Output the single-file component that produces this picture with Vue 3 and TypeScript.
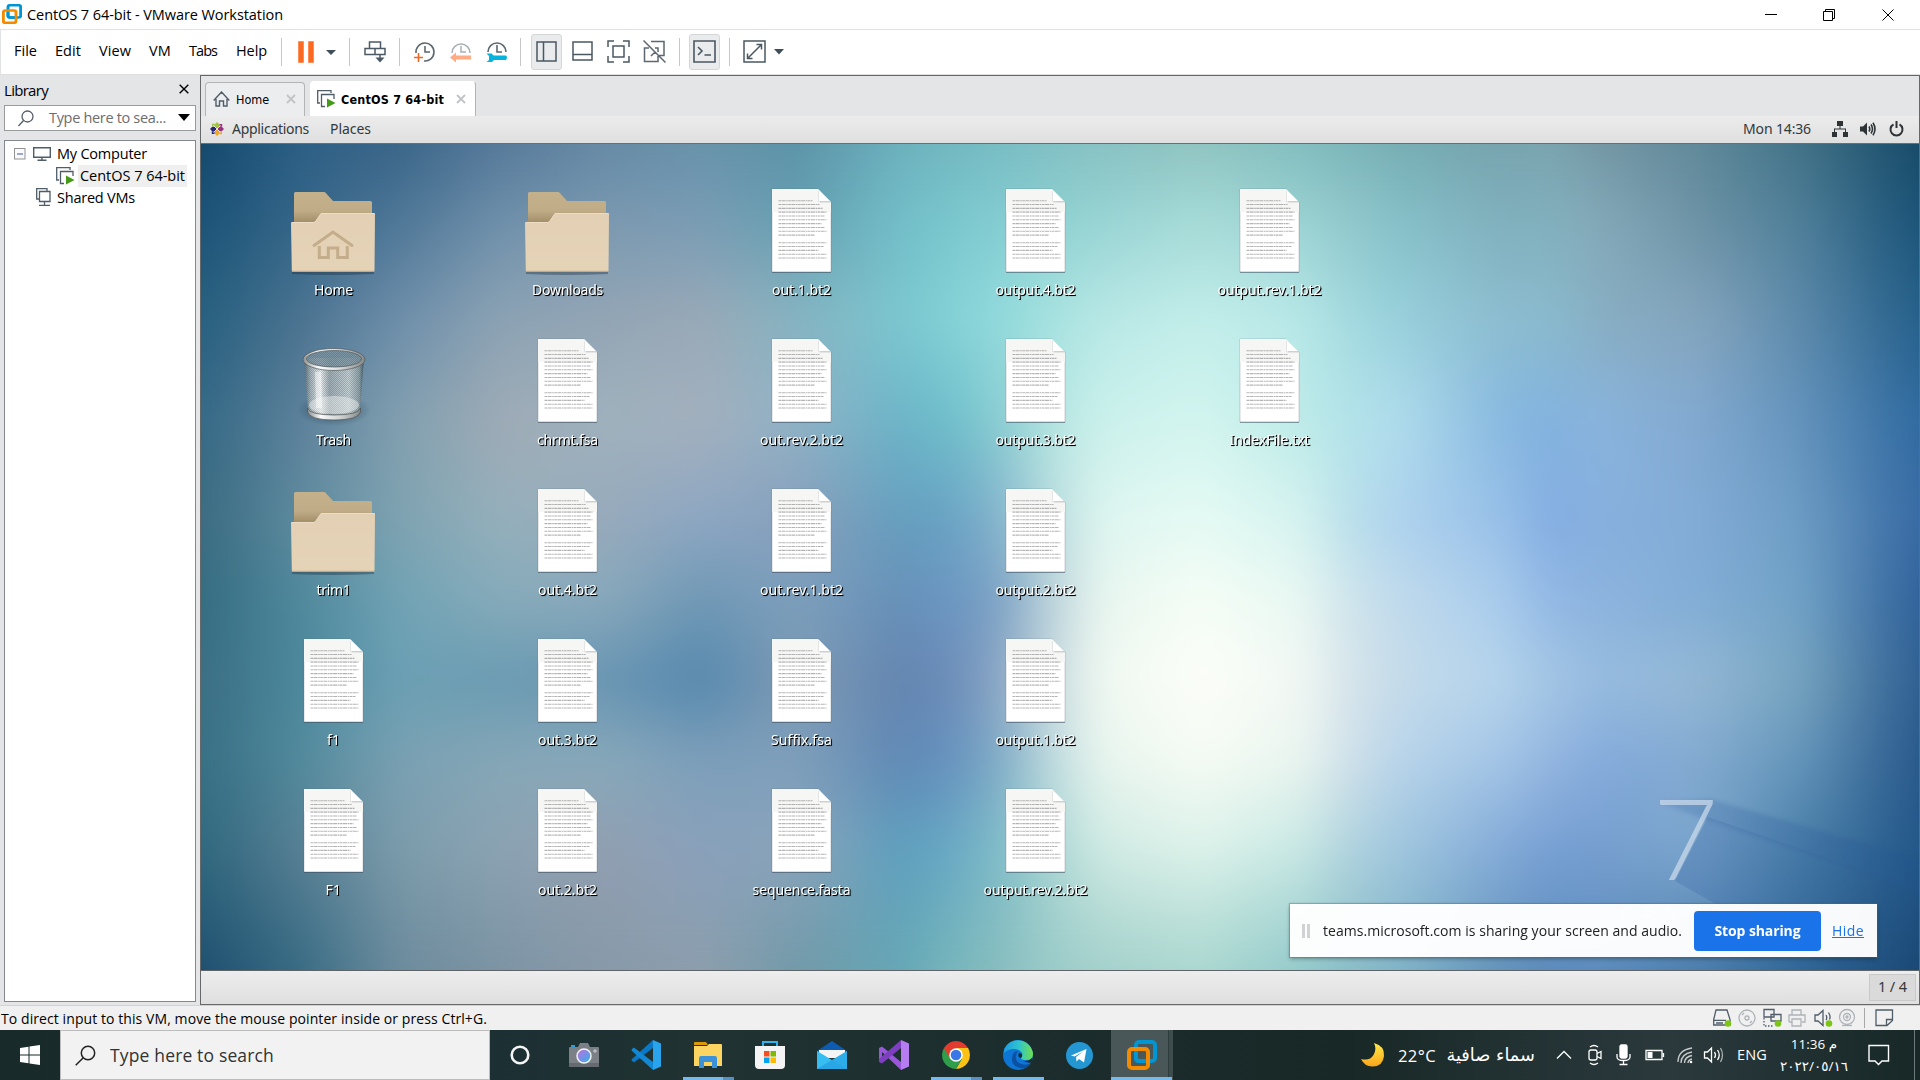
<script setup lang="ts">
import type { Directive } from 'vue'

/* Spreads the letter spacing of a label so that it fills the given width. */
const vFit: Directive<HTMLElement, number> = {
  mounted(el, binding) {
    const count = (el.textContent ?? '').trim().length
    const range = document.createRange()
    range.selectNodeContents(el)
    const natural = range.getBoundingClientRect().width
    if (count > 0) el.style.letterSpacing = `${((binding.value - natural) / count).toFixed(3)}px`
  },
}

type Kind = 'home' | 'folder' | 'trash' | 'file'
interface Item { kind: Kind; name: string; w: number }
const f = (name: string, w: number): Item => ({ kind: 'file', name, w })
const columns: Item[][] = [
  [{ kind: 'home', name: 'Home', w: 39 }, { kind: 'trash', name: 'Trash', w: 35 }, { kind: 'folder', name: 'trim1', w: 34 }, f('f1', 13), f('F1', 16)],
  [{ kind: 'folder', name: 'Downloads', w: 71 }, f('chrmt.fsa', 61), f('out.4.bt2', 59), f('out.3.bt2', 59), f('out.2.bt2', 59)],
  [f('out.1.bt2', 59), f('out.rev.2.bt2', 83), f('out.rev.1.bt2', 83), f('Suffix.fsa', 61), f('sequence.fasta', 98)],
  [f('output.4.bt2', 80), f('output.3.bt2', 80), f('output.2.bt2', 80), f('output.1.bt2', 80), f('output.rev.2.bt2', 104)],
  [f('output.rev.1.bt2', 104), f('IndexFile.txt', 80)],
]
const lines: [number, number][] = [34, 41, 44, 48, 46, 48, 43, 46, 48, 36, 0, 48, 45, 40, 48, 48].map((w, i) => [w, 11.7 + i * 3.82])

/* Wallpaper colour mesh: one row of colours for each listed height. */
const meshX = [201, 300, 400, 500, 600, 700, 800, 900, 950, 1000, 1050, 1100, 1200, 1300, 1350, 1400, 1500, 1550, 1600, 1700, 1800, 1919]
const meshY = [144, 220, 320, 420, 520, 600, 680, 760, 850, 970]
const mesh = [
  '15496c 2d5f85 3a6588 56799a 6689a5 6893aa 5c93a8 6cb0bd 72b7c0 78bcc3 80bfc4 88c1c3 8fc3c0 83bdbf 7cb5b9 76adb3 77a3ae 7aa5b0 7496a3 60899a 427287 174a68',
  '1b5377 356689 4f7797 6f90ab 7b99b0 7a9cb5 65a0b1 72bec8 7ac7ce 83cdd2 8ed1d0 98d4d4 a6dbd8 9bd3d3 90c7cc 86c0c8 80b0bd 82b0bd 84a9b8 6c92a5 4f7f99 1a5277',
  '27607f 4b7390 6f8fab 8ca3b4 93a5b5 9aa9b7 86b4c2 7bc7d0 84d2d7 92dadc a6e2e0 b8e8e6 c3eeea b8e8e8 a3dadf 98d0dc 8dbdd0 8abbce 88aec3 84a5bd 5d8aab 245f8a',
  '356986 5d819b 82a0b0 9fabb6 9fb2bd a4b0be 8fb2c6 6cb4c8 6fbfcb 8acdd2 b4e4e0 cbf1ec d3f5ef bdebe8 b3e3ea b0dcec 88b9e0 82b2df 8ab4dc 82a9d0 6493bc 2f6aa0',
  '3a6b80 5e8b9f 7fa3b1 95b0bc 98aabb 8da7c3 889fbb 659ebe 69a2c4 85b4cc b8dbdd def5f0 e6faf4 d6f3f0 b9dfea aed2ee 98c0e8 83ade2 88b0df 82abd5 6d9dc4 3769a3',
  '356c82 4f889c 70a3b5 86abba 89a9bb 6f98b5 7c9fbc 6790b8 6b96c2 7da2c4 bbd2da e8f6ef f5fdf6 e9f8f2 cfe4ec c0daec a9ccec 92b8e5 8cb3dd 82add6 71a2c6 2f6099',
  '3b6e84 4c889c 6ca0b4 6a9bb2 6995b3 5588ae 7f9ab4 6385b0 6b8cb8 8ca7c5 c6d9de f0f8f1 fdfef9 f2f8f4 d6e4ea c5dbea b5d4ec a4c6e4 97bce0 94b8d4 76a4bf 2d5d90',
  '386f84 528a9c 7aa1b3 86a7b7 88a9ba 7d9fba 7e9fbb 6089b5 6692bf 80acc6 bddade e8f5ee f5fbf4 eaf5ef cfe0ea b8d4ea a3c5e6 94b6e0 84abdc 83aad0 6495ba 27578a',
  '2f687e 587f94 7c9cab 8ca3b3 929fb0 8aa1bc 8aa4ba 5d9fbe 69a9c4 7fbdc8 a9d5d3 cfeae3 dcf2ea c8e8e4 afd2dd 9fc6de 84abd8 769fd3 769ecf 7ba6cc 4a7fa8 225688',
  '1f4f6f 376b83 6c8b9c 7c93a3 8799a9 8d9eac 7099a8 66a7b5 76b6bb 88bdbe 99cac8 a2cfca a9d6cf 92c9c9 88bcc6 7fb2c5 6191b8 5b8abb 5b8bbb 4a7cab 2f6697 1a4670',
]
const bands = mesh.map((row, i) => {
  const stops = row.split(' ').map((c, j) => `#${c} ${meshX[j] - 201}px`).join(', ')
  const mask = i === 0 ? 'none' : `linear-gradient(to bottom, transparent ${meshY[i - 1] - 144}px, #000 ${meshY[i] - 144}px)`
  return { backgroundImage: `linear-gradient(to right, ${stops})`, maskImage: mask }
})

const menus: [string, number, number][] = [['File', 23, 18], ['Edit', 26, 18], ['View', 32, 18], ['VM', 22, 18], ['Tabs', 28, 19], ['Help', 31, 14]]
type App = { id: string; open?: string }
const apps: App[] = [{ id: 'camera' }, { id: 'code' }, { id: 'files', open: 'multi' }, { id: 'store' }, { id: 'mail' }, { id: 'vs' }, { id: 'chrome', open: 'multi' }, { id: 'edge', open: 'one' }, { id: 'telegram' }, { id: 'vmware', open: 'active' }]
</script>

<template>
  <div class="screen">
    <header class="titlebar">
      <svg class="vmlogo" width="20" height="20" viewBox="0 0 30 34" preserveAspectRatio="none"><rect x="9" y="2" width="19" height="21" rx="3" fill="none" stroke="#0095d3" stroke-width="4.4" /><rect x="2" y="11" width="19" height="21" rx="3" fill="none" stroke="#f38b00" stroke-width="4.4" /><path d="M9 14v6q0 3 3 3h7" fill="none" stroke="#0095d3" stroke-width="4.4" /></svg>
      <span v-fit="256" class="title">CentOS 7 64-bit - VMware Workstation</span>
      <svg class="winbtns" width="130" height="14" viewBox="0 0 130 14" fill="none" stroke="#000" stroke-width="1"><path d="M0 6.500h12M58.500 3.500h9v9h-9zM60.500 3.500v-2h9v9h-2M117.500 1.500l11 11M128.500 1.500l-11 11" /></svg>
    </header>

    <nav class="toolbar">
      <span v-for="m in menus" :key="m[0]" class="menu" :style="{ width: m[1] + 'px', marginRight: m[2] + 'px' }"><span v-fit="m[1]">{{ m[0] }}</span></span>
      <i class="sep" />
      <svg class="t1" width="38" height="22" viewBox="0 0 38 22"><path d="M.5.500h5v21h-5zM10.500.500h5v21h-5z" fill="#fb6a20" stroke="#fb6a20" stroke-width=".5" /><path d="M28 9h10l-5 5z" fill="#3e4e5b" /></svg>
      <i class="sep s2" />
      <svg class="t2" width="22" height="22" viewBox="0 0 22 22" fill="none" stroke="#4b5a66" stroke-width="1.500"><path d="M5.500 1h11v6.500h-11zM1 7.500h20v6H1zM11 7.500v6M16 13v6" /><path d="M11.500 16.500h9L16 21.500z" fill="#4b5a66" stroke="none" /></svg>
      <i class="sep s3" />
      <svg class="t3" width="22" height="22" viewBox="0 0 22 22" fill="none" stroke="#5c6770" stroke-width="1.600"><path d="M2 12A9 9 0 1 1 10 20M11 5v6h5" /><path d="M4.500 12v9M0 16.500h9" stroke="#f26522" /></svg>
      <svg class="t4" width="22" height="22" viewBox="0 0 22 22" fill="none" stroke="#a9b0b5" stroke-width="1.500"><path d="M2 12a9 9 0 1 1 18 0M11 5v6h5" /><path d="M0 16.500l6-5v3h15v4H6v3z" fill="#ffac84" stroke="none" /></svg>
      <svg class="t5" width="22" height="22" viewBox="0 0 22 22" fill="none" stroke="#5c6770" stroke-width="1.600"><path d="M2 11a9 9 0 1 1 18 0M11 4v7h5" /><path d="M.5 12.500h5l2 2H20q2 2 0 4.500H8l-2 2H.5l2.500-2v-4z" fill="#07b3dc" stroke="none" /></svg>
      <i class="sep s4" />
      <span class="pressed p1"><svg width="21" height="21" viewBox="0 0 21 21" fill="none" stroke="#4a5863" stroke-width="1.500"><path d="M1 1h19v19H1zM7.500 1v19" /></svg></span>
      <svg class="t6" width="21" height="20" viewBox="0 0 21 20" fill="none" stroke="#4a5863" stroke-width="1.500"><path d="M1 1h19v18H1zM1 13.500h19" /></svg>
      <svg class="t7" width="23" height="23" viewBox="0 0 23 23" fill="none" stroke="#4a5863" stroke-width="1.500"><path d="M1 7V1h6M16 1h6v6M22 16v6h-6M7 22H1v-6M6 6h11v11H6z" /></svg>
      <svg class="t8" width="23" height="23" viewBox="0 0 23 23" fill="none" stroke="#5c6770" stroke-width="1.500"><path d="M8 1.500h13v14h-5M12 8h3v4M6 8H1.500v13.500H15V16M.5.500l22 22M12 12l-4 4" /></svg>
      <i class="sep s5" />
      <span class="pressed p2"><svg width="23" height="23" viewBox="0 0 23 23" fill="none" stroke="#4a5863" stroke-width="1.600"><path d="M1 1h21v21H1zM5 7l4 4-4 4M11.500 15h6.500" /></svg></span>
      <i class="sep s6" />
      <svg class="t9" width="41" height="23" viewBox="0 0 41 23" fill="none" stroke="#4a5863" stroke-width="1.500"><path d="M1 1h21v21H1zM13.500 4.500h5v5M9.500 18.500h-5v-5M18.500 4.500l-14 14" /><path d="M31 9h10l-5 5.500z" fill="#3e4e5b" stroke="none" /></svg>
    </nav>

    <main class="work">
      <aside class="library">
        <div class="libhead"><span v-fit="44">Library</span><svg width="10" height="10" viewBox="0 0 10 10" stroke="#000" stroke-width="1.400"><path d="M.7.700l8.600 8.600M9.300.700L.7 9.300" /></svg></div>
        <div class="libsearch">
          <svg width="16" height="17" viewBox="0 0 16 17" fill="none" stroke="#555f68" stroke-width="1.300"><circle cx="9.500" cy="6.500" r="5.500" /><path d="M5.500 10.500L.5 16" /></svg>
          <span v-fit="117">Type here to sea...</span>
          <svg width="12" height="7" viewBox="0 0 12 7"><path d="M0 0h12L6 7z" /></svg>
        </div>
        <div class="tree">
          <div class="row r1"><svg width="12" height="12" viewBox="0 0 12 12"><rect x=".5" y=".5" width="10.500" height="10.500" fill="#fafafa" stroke="#939393" /><path d="M3 6h6" stroke="#3b53b0" /></svg><svg class="mon" width="18" height="14" viewBox="0 0 18 14" fill="none" stroke="#4f5d69" stroke-width="1.400"><path d="M.7.700h16.600v9.600H.7zM9 10.500V13M4.500 13.300h9" /></svg><span v-fit="90">My Computer</span></div>
          <div class="row r2"><svg width="19" height="18" viewBox="0 0 19 18" fill="none" stroke="#4f5d69" stroke-width="1.300"><path d="M3 13H.7V.7H14V3M8 16.500H4.500V4.500H17V9" /><path d="M10 8.500l8.500 4.500-8.500 4.500z" fill="#459a17" stroke="none" /></svg><span class="picked"><span v-fit="105">CentOS 7 64-bit</span></span></div>
          <div class="row r3"><svg width="15" height="18" viewBox="0 0 15 18" fill="none" stroke="#4f5d69" stroke-width="1.300"><path d="M3 11H.7V.7H11V3M3.500 3.500h10.500V13.500H3.500zM8.500 14v3M3 17.300h11" /></svg><span v-fit="78">Shared VMs</span></div>
        </div>
      </aside>

      <section class="console">
        <div class="tabs">
          <div class="tab home"><svg width="17" height="16" viewBox="0 0 17 16" fill="none" stroke="#4f5d69" stroke-width="1.400"><path d="M.7 9.500L8.500 1l7.800 8.500M3 8v7h3.500v-5h4v5H14V8" /></svg><span v-fit="33">Home</span><svg class="tx" width="10" height="10" viewBox="0 0 10 10" stroke="#c2c3c4" stroke-width="1.800"><path d="M1 1l8 8M9 1L1 9" /></svg></div>
          <div class="tab active"><svg width="19" height="18" viewBox="0 0 19 18" fill="none" stroke="#4f5d69" stroke-width="1.300"><path d="M3 13H.7V.7H14V3M8 16.500H4.500V4.500H17V9" /><path d="M10 8.500l8.500 4.500-8.500 4.500z" fill="#459a17" stroke="none" /></svg><span v-fit="103">CentOS 7 64-bit</span><svg class="tx" width="10" height="10" viewBox="0 0 10 10" stroke="#c2c3c4" stroke-width="1.800"><path d="M1 1l8 8M9 1L1 9" /></svg></div>
        </div>
        <div class="gnome">
          <svg width="14" height="14" viewBox="0 0 14 14"><g v-for="a in [0, 90, 180, 270]" :key="a" :transform="`rotate(${a} 7 7)`"><path d="M7 0l2.200 2.200v3L7 7 4.800 5.200v-3z" :fill="['#a3c443', '#9b2f7f', '#efa724', '#262577'][a / 90]" /><path d="M9.500 2h2.700v2.700L9.500 4.500z" :fill="['#9b2f7f', '#efa724', '#262577', '#a3c443'][a / 90]" /></g><path d="M3.500 3.500l7 7M10.500 3.500l-7 7" stroke="#eee" stroke-width=".9" /></svg>
          <span v-fit="77" class="applications">Applications</span><span v-fit="41" class="places">Places</span>
          <span v-fit="68" class="clock">Mon 14:36</span>
          <svg class="g1" width="16" height="16" viewBox="0 0 16 16" fill="#2e3436"><path d="M5 0h6v5H8.500v2.500H14V11h2v5h-5v-5h2V8.500H3V11h2v5H0v-5h2V7.500h5.500V5H5z" /></svg>
          <svg class="g2" width="16" height="14" viewBox="0 0 16 14" fill="none" stroke="#2e3436" stroke-width="1.600"><path d="M0 4.500h3L7 .5v13L3 9.500H0z" fill="#2e3436" stroke="none" /><path d="M9 4.500q1.500 2.500 0 5M11 2.500q3 4.500 0 9M13 .7q4 6.300 0 12.600" /></svg>
          <svg class="g3" width="15" height="16" viewBox="0 0 15 16" fill="none" stroke="#2e3436" stroke-width="2"><path d="M4.500 3.300a6 6 0 1 0 6 0M7.500 0v7" /></svg>
        </div>
        <div class="desktop">
          <div v-for="(b, i) in bands" :key="i" class="band" :style="b" />
          <div class="haze" />
          <svg class="rays" width="320" height="190" viewBox="0 0 320 190"><defs><linearGradient id="ray" x1="0" x2="1"><stop offset="0" stop-color="#4672ac" stop-opacity=".25" /><stop offset=".5" stop-color="#3a6aa4" stop-opacity=".4" /><stop offset="1" stop-color="#1c4f86" stop-opacity=".45" /></linearGradient><linearGradient id="wide" x1="0" x2="1"><stop offset="0" stop-color="#4672b0" stop-opacity=".36" /><stop offset="1" stop-color="#1e5288" stop-opacity=".1" /></linearGradient></defs><path class="soft" d="M59 22l51-3 230 66v34L106 40z" fill="url(#ray)" /><path d="M108 37l212 73v80H232L75 101z" fill="url(#wide)" /></svg>
          <span class="seven">7</span>
          <span class="brand">CENTOS</span>
          <div class="icons">
            <div v-for="(col, c) in columns" :key="c" class="col">
              <div v-for="it in col" :key="it.name" class="item">
                <div class="pic">
                  <svg v-if="it.kind === 'file'" class="doc" width="61" height="86" viewBox="-1 -1 61 86"><path d="M0 0h46l13 13v70H0z" fill="#fff" stroke="#50646e" stroke-opacity=".35" stroke-width=".8" /><path d="M0 83.400h59" stroke="#345" stroke-opacity=".5" /><path d="M0 0h46v13h13v10H0z" fill="#f6f6f5" /><path d="M46 0l13 13H47.500z" fill="#fff" /><path d="M47.500 12.800H59" stroke="#b9bcbd" stroke-width="1" /><path d="M46.500 2v11" stroke="#e3e4e4" /><path v-for="(l, n) in lines" :key="n" :d="`M6.500 ${l[1]}h${l[0]}`" stroke="#777" stroke-opacity=".55" stroke-width="1.100" stroke-dasharray="2.600 .5 4 .6 1.600 .5" /></svg>
                  <svg v-else-if="it.kind === 'trash'" class="trash" width="76" height="84" viewBox="-7 -4 76 84">
                    <defs><linearGradient id="can" x1="0" x2="1"><stop offset="0" stop-color="#5b6d74" /><stop offset=".1" stop-color="#aab7bc" /><stop offset=".28" stop-color="#fff" /><stop offset=".42" stop-color="#a5b1b6" /><stop offset=".75" stop-color="#d0d9db" /><stop offset=".92" stop-color="#93a4a9" /><stop offset="1" stop-color="#3e535d" /></linearGradient><linearGradient id="rim" x1="0" x2="1"><stop offset="0" stop-color="#8d8f8e" /><stop offset=".25" stop-color="#fff" /><stop offset=".6" stop-color="#d8d9d8" /><stop offset="1" stop-color="#858887" /></linearGradient><pattern id="net" width="2" height="2" patternUnits="userSpaceOnUse"><rect width="1" height="1" fill="#2c4654" fill-opacity=".26" /><rect x="1" y="1" width="1" height="1" fill="#2c4654" fill-opacity=".26" /></pattern><radialGradient id="floor"><stop offset="0" stop-color="#10293b" stop-opacity=".6" /><stop offset="1" stop-color="#10293b" stop-opacity="0" /></radialGradient></defs>
                    <ellipse cx="31" cy="62" rx="37" ry="16" fill="url(#floor)" />
                    <path d="M1 10l4 52q2 9 26 9t26-9l4-52z" fill="url(#can)" fill-opacity=".9" /><path d="M1 10l4 52q2 9 26 9t26-9l4-52z" fill="url(#net)" />
                    <ellipse cx="31" cy="57" rx="25" ry="9" fill="#f4f6f5" fill-opacity=".45" />
                    <path d="M4.500 60q2 7 26.500 7t26.500-7v4q-2 8-26.500 8t-26.500-8z" fill="url(#rim)" fill-opacity=".9" stroke="#4d5150" stroke-width=".7" />
                    <ellipse cx="31" cy="11.500" rx="29" ry="9.500" fill="#8098a4" fill-opacity=".85" /><ellipse cx="31" cy="11.500" rx="29" ry="9.500" fill="url(#net)" /><path d="M0 11.500a31 11 0 0 1 62 0 31 11 0 0 1-62 0zM3.500 11a27.500 8 0 0 0 55 0 27.500 8.500 0 0 0-55 0z" fill="url(#rim)" fill-rule="evenodd" stroke="#50585a" stroke-width=".7" /><path d="M15 24L16 60" stroke="#fff" stroke-opacity=".45" stroke-width="6" />
                  </svg>
                  <svg v-else class="folder" width="88" height="86" viewBox="-2 -1 88 86">
                    <defs><linearGradient id="back" gradientUnits="userSpaceOnUse" x1="0" x2="0" y1="0" y2="30"><stop offset="0" stop-color="#c4b18b" /><stop offset=".62" stop-color="#c0ad87" /><stop offset="1" stop-color="#a3906b" /></linearGradient><linearGradient id="front" y1="0" y2="1" x1="0" x2="0"><stop offset="0" stop-color="#e3d0b4" /><stop offset="1" stop-color="#e5d3b8" /></linearGradient></defs>
                    <path d="M1 79h82v3q-41 2-82 0z" fill="#14232e" fill-opacity=".35" />
                    <path d="M3 31V1.500Q3 0 4.500 0H33q1 0 2 1.200L42 9h37.500Q81 9 81 10.500V30z" fill="url(#back)" />
                    <path d="M0 31q0-1 1-1h21.500q1.500 0 2.200-1.200l4.600-6.600q.8-1.200 2-1.200H83q1 0 1 1l-.5 56.500q0 1.500-1.500 1.500H2Q.8 80 .8 78.500z" fill="url(#front)" /><path d="M1 79.300h82" stroke="#cfa97d" stroke-width="1.200" /><path d="M1 30.500h22q1.500-.5 2-1.500l5-7.500h53.500" fill="none" stroke="#efe0ca" stroke-width=".8" />
                    <g v-if="it.kind === 'home'" fill="none" stroke="#c4ad8b" stroke-width="3"><path d="M23 53.500L42 40l19 13.500" stroke-linecap="round" /><path d="M28.300 54v11.500h9V56h9.400v9.500h9.600V54" /></g>
                  </svg>
                </div>
                <span v-fit="it.w" class="label">{{ it.name }}</span>
              </div>
            </div>
          </div>
          <div class="share">
            <i class="grip" /><span v-fit="359" class="msg">teams.microsoft.com is sharing your screen and audio.</span>
            <span class="stop"><span v-fit="86">Stop sharing</span></span><span v-fit="32" class="hide">Hide</span>
          </div>
        </div>
        <div class="panel"><span class="pager"><span v-fit="29">1 / 4</span></span></div>
      </section>
    </main>

    <footer class="status">
      <span v-fit="486" class="hint">To direct input to this VM, move the mouse pointer inside or press Ctrl+G.</span>
      <svg class="devices" width="182" height="20" viewBox="0 0 182 20" fill="none" stroke="#4f5d69" stroke-width="1.300">
        <path d="M1.700 11.500L4 2h11l3 9.500V17H1.700zM1.700 12.300H14M4 15h7" /><circle cx="16" cy="15.500" r="3.300" fill="#7cc514" stroke="none" />
        <g stroke="#adb3b8"><circle cx="35" cy="10" r="8" /><circle cx="35" cy="10" r="2" /><path d="M30 7l2-2M38 15l2-2" /><path d="M80 7V2h9v5M77 14V7h16v7h-3M80 11h9v7h-9zM80 14h-3" /><circle cx="135" cy="9" r="7.500" /><circle cx="135" cy="9" r="3.500" /><circle cx="135" cy="9" r="1" /><path d="M130 17.500h10" /></g>
        <path d="M52 1.500h10V9H52zM59 6.500h10V13H59z" /><path d="M52 10v8h9" stroke-dasharray="1.500 1.500" /><circle cx="66" cy="15.500" r="3.300" fill="#7cc514" stroke="none" />
        <path d="M103 7h3l5-4.500v15l-5-4.500h-3zM114 7q1.500 3 0 5M116.500 4.500q2.500 4 1 7" /><circle cx="117" cy="15.500" r="3.300" fill="#7cc514" stroke="none" />
        <path d="M152.500 0v20" stroke="#a7a7a7" stroke-width="1" /><path d="M164 2h16.500v10.500L175 17.500h-11zM174.500 17.500v-6h6" />
      </svg>
    </footer>

    <footer class="taskbar">
      <span class="start"><svg width="20" height="20" viewBox="0 0 20 20" fill="#fff"><path d="M0 3l8.500-1.300v7.800H0zM9.500 1.500L20 0v9.500H9.500zM0 10.500h8.500v7.800L0 17zM9.500 10.500H20V20L9.500 18.500z" /></svg></span>
      <div class="search"><svg width="21" height="21" viewBox="0 0 21 21" fill="none" stroke="#222" stroke-width="1.500"><circle cx="13" cy="8" r="6.700" /><path d="M8.300 12.700L.7 20.300" /></svg><span v-fit="164">Type here to search</span></div>
      <span class="cortana"><svg width="20" height="20" viewBox="0 0 20 20"><circle cx="10" cy="10" r="8.300" fill="none" stroke="#f4f4f4" stroke-width="2.600" /></svg></span>
      <span v-for="a in apps" :key="a.id" class="app" :class="a.open">
        <svg v-if="a.id === 'camera'" width="30" height="24" viewBox="0 0 30 24"><defs><linearGradient id="lens" x1="0" x2="1" y2="1"><stop offset=".2" stop-color="#a77be0" /><stop offset="1" stop-color="#27b5f0" /></linearGradient></defs><path d="M2 2h4v3H2z" fill="#2b9ee0" /><path d="M0 5q0-1 1-1h8l2-4h8l2 4h8q1 0 1 1v19H0z" fill="#7b8086" /><path d="M0 20h30v4H0z" fill="#666b71" /><circle cx="15" cy="13" r="7" fill="url(#lens)" stroke="#f2f2f2" stroke-width="1.500" /><path d="M26 6v4M24 8h4" stroke="#c9cdd1" /></svg>
        <svg v-else-if="a.id === 'code'" width="30" height="30" viewBox="0 0 30 30"><path d="M22 0l8 3.500v23L22 30z" fill="#29a3ec" /><path d="M22 0L1 19q-1 1 0 2l2 1.500L22 8z" fill="#0a78c4" /><path d="M22 30L1 11q-1-1 0-2l2-1.500L22 22z" fill="#1288d4" /></svg>
        <svg v-else-if="a.id === 'files'" width="28" height="26" viewBox="0 0 28 26"><path d="M0 1q0-1 1-1h11l2 3H0z" fill="#dc9a06" /><path d="M0 4h13l2-2h12q1 0 1 1v21H0z" fill="#fcd462" /><path d="M5 26V16q0-2 2-2h14q2 0 2 2v10h-5v-6h-8v6z" fill="#3c92d8" /></svg>
        <svg v-else-if="a.id === 'store'" width="30" height="30" viewBox="0 0 30 30"><path d="M8 7V2h14v5" fill="none" stroke="#2fb4ee" stroke-width="2" /><path d="M0 6h30v19q0 4-4 4H4q-4 0-4-4z" fill="#f4f4f4" /><path d="M9 11h5.500v5.500H9z" fill="#f25022" /><path d="M15.500 11H21v5.500h-5.500z" fill="#7fba00" /><path d="M9 17.500h5.500V23H9z" fill="#00a4ef" /><path d="M15.500 17.500H21V23h-5.500z" fill="#ffb900" /></svg>
        <svg v-else-if="a.id === 'mail'" width="30" height="28" viewBox="0 0 30 28"><path d="M0 10L15 0l15 10v5H0z" fill="#0d5cb0" /><path d="M2 9h26v8H2z" fill="#f4f4f4" /><path d="M0 10l15 9 15-9v18H0z" fill="#36bdf2" /><path d="M15 19l15 9H0z" fill="#2aa5e6" /><path d="M15 19l15 9V10z" fill="#1b8bd8" fill-opacity=".35" /></svg>
        <svg v-else-if="a.id === 'vs'" width="30" height="30" viewBox="0 0 30 30"><path d="M22 0l8 3.500v23L22 30z" fill="#b57df0" /><path d="M0 8l3-1.500L22 22v8L3 12v7l-3 2z" fill="#9a57dc" /><path d="M22 0v8L3 23.500 0 22v-3z" fill="#7d3fc0" /></svg>
        <svg v-else-if="a.id === 'chrome'" width="28" height="28" viewBox="0 0 28 28"><path d="M26.100 7A14 14 0 0 1 14 28l6-10.500L14 7z" fill="#fbc116" /><path d="M14 14L1.900 7A14 14 0 0 0 14 28l6-10.500z" fill="#2f9e4a" /><path d="M8 17.500L1.900 7a14 14 0 0 1 24.200 0H14z" fill="#e33b2e" /><circle cx="14" cy="14" r="6.800" fill="#fff" /><circle cx="14" cy="14" r="5.300" fill="#3b78e7" /></svg>
        <svg v-else-if="a.id === 'edge'" width="30" height="30" viewBox="0 0 30 30"><defs><linearGradient id="wave" x1="0" x2="1"><stop offset="0" stop-color="#1d9be0" /><stop offset=".5" stop-color="#2fc3d0" /><stop offset="1" stop-color="#6fe04c" /></linearGradient></defs><circle cx="15" cy="15" r="15" fill="#0d75d4" /><path d="M1 10A15 15 0 0 1 30 14q0 6-7 6-5 0-5-2 2-2 1-5-2-4-8-4-6 0-10 4z" fill="url(#wave)" /><path d="M10 14q-4 12 8 14 7 1 10-5-4 3-10 1-6-2-5-8 0-3 2-5-3 0-5 3z" fill="#0d4fa0" /><path d="M18 18q-4-1-2-5 3 0 3 2 0 2-1 3zM20.500 21q6 .500 9-3.500l-1 5q-3 1-8-1.500z" fill="#1b2b2e" /></svg>
        <svg v-else-if="a.id === 'telegram'" class="tg" width="27" height="27" viewBox="0 0 27 27"><circle cx="13.500" cy="13.500" r="13.500" fill="#2497d3" /><path d="M5 13.500L20.500 7 18 20.500l-5-3.500-2.500 2.500-.5-4.500 7-5.500-8.500 5z" fill="#fff" /></svg>
        <svg v-else width="30" height="30" viewBox="0 0 30 30"><rect x="9" y="2" width="19" height="19" rx="3" fill="none" stroke="#0095d3" stroke-width="4" /><rect x="2" y="9" width="19" height="19" rx="3" fill="none" stroke="#f38b00" stroke-width="4" /><path d="M9 12v6q0 3 3 3h7" fill="none" stroke="#0095d3" stroke-width="4" /></svg>
      </span>
      <div class="tray">
        <svg class="moon" width="24" height="24" viewBox="0 0 24 24"><defs><linearGradient id="moon" x1="0" x2="0" y2="1"><stop offset="0" stop-color="#ffe94a" /><stop offset="1" stop-color="#f9a51a" /></linearGradient></defs><path d="M13 0Q24 3 23 13T12 23.500Q4 24 0 16q9 2 12.500-4T13 0z" fill="url(#moon)" /></svg>
        <span v-fit="38" class="temp">22°C</span><span class="sky" dir="rtl" lang="ar">سماء صافية</span>
        <svg class="y1" width="168" height="22" viewBox="0 0 168 22" fill="none" stroke="#fff" stroke-width="1.300">
          <path d="M1 14.500l7-7 7 7" /><rect x="33" y="6" width="8" height="10" rx="2" /><path d="M41 9.500l4-2v7l-4-2M34 3q4-3 8 0M34 19q4 3 8 0" />
          <rect x="64" y="1" width="7" height="13" rx="1.500" fill="#fff" /><path d="M61 10v3q0 3.500 6.500 3.500T74 13v-3M67.500 17v3M63.500 20.500h8" />
          <path d="M90 6.500h16v9H90zM107.500 9v4" /><path d="M91.500 8h5v6h-5z" fill="#fff" stroke="none" />
          <g stroke-opacity=".75"><path d="M122 18Q122 6 136 4M125 19q0-9 11-11M128.500 19q0-6 7.500-7.500M132 19q0-3 4-4" /></g><circle cx="135" cy="18" r="1.300" fill="#fff" stroke="none" />
          <path d="M148.500 8h3l4-4v14l-4-4h-3zM158.500 8q2 3 0 6M161.500 6q3.500 5 0 10" /><path d="M164.500 4q4 7 0 14" stroke-opacity=".6" />
        </svg>
        <span v-fit="30" class="lang">ENG</span>
        <span class="when"><span>11:36 م</span><span>٢٠٢٢/٠٥/١٦</span></span>
        <svg class="bell" width="22" height="22" viewBox="0 0 22 22" fill="none" stroke="#fff" stroke-width="1.400"><path d="M1 1.500h19.500v15.500H14l-3.500 3.500L7 17H1z" /></svg>
        <i class="peek" />
      </div>
    </footer>
  </div>
</template>

<style>
body { margin: 0; overflow: hidden; }
</style>

<style scoped>
.screen { width: 1920px; height: 1080px; display: flex; flex-direction: column; overflow: hidden; font: 15px/20px "Open Sans", "Noto Sans", sans-serif; color: #000; background: #e4e5e7; white-space: nowrap; }
svg { display: block; flex: none; }
span { flex: none; }
i { flex: none; display: block; }
.titlebar { height: 30px; background: #fff; border-bottom: 1px solid #e1e2e3; display: flex; align-items: center; box-sizing: border-box; }
.vmlogo { margin-left: 2px; margin-top: -2px; }
.title { margin-left: 5px; font-size: 14.5px; }
.winbtns { margin-left: auto; margin-right: 25px; }
.toolbar { height: 45px; background: #fff; border-left: 1px solid #e1e2e3; border-bottom: 1px solid #dedfe0; display: flex; align-items: center; padding: 0 0 1px 13px; box-sizing: border-box; }
.menu { font-size: 14.5px; margin-top: -1px; }
.sep { width: 1px; height: 28px; background: #c6c7c9; }
.t1 { margin-left: 16px; } .s2 { margin-left: 13px; } .t2 { margin-left: 14px; } .s3 { margin-left: 13px; }
.t3 { margin-left: 14px; } .t4 { margin-left: 14px; } .t5 { margin-left: 14px; } .s4 { margin-left: 12px; }
.pressed { box-sizing: border-box; width: 31px; height: 36px; border: 1px solid #d4d7d8; border-radius: 3px; background: #e9ebec; display: flex; align-items: center; justify-content: center; }
.p1 { margin-left: 10px; } .t6 { margin-left: 10px; margin-top: -1px; } .t7 { margin-left: 14px; } .t8 { margin-left: 13px; }
.s5 { margin-left: 13px; } .p2 { margin-left: 9px; } .s6 { margin-left: 9px; } .t9 { margin-left: 13px; }
.work { height: 930px; display: flex; border-bottom: 1px solid #d2d3d5; }
.library { width: 200px; box-sizing: border-box; padding: 0 4px 3px; display: flex; flex-direction: column; }
.libhead { height: 30px; display: flex; align-items: center; justify-content: space-between; padding: 0 7px 1px 0; box-sizing: border-box; }
.libhead svg { margin-top: -1px; }
.libsearch { height: 26px; box-sizing: border-box; border: 1px solid #9a9b9d; background: #fff; display: flex; align-items: center; padding-left: 13px; color: #6d6d6d; font-size: 14.5px; }
.libsearch span { margin-left: 15px; width: 121px; }
.libsearch svg:last-child { margin-left: 8px; margin-top: -2px; }
.tree { margin-top: 9px; flex: 1; border: 1px solid #828790; background: #fff; padding-top: 2px; font-size: 14.5px; }
.row { height: 22px; display: flex; align-items: center; }
.r1 { padding-left: 9px; } .r1 .mon { margin: 0 6px 0 7px; }
.r2 { padding-left: 51px; } .picked { background: #efefef; height: 22px; line-height: 22px; padding: 0 2px; margin-left: 3px; width: 105px; }
.r3 { padding-left: 31px; } .r3 svg { margin-top: -2px; } .r3 span { margin-left: 6px; }
.console { width: 1720px; box-sizing: border-box; border: 1px solid #66686a; display: flex; flex-direction: column; height: 930px; }
.tabs { height: 40px; display: flex; align-items: flex-end; padding-left: 4px; box-sizing: border-box; font: 12.5px/16px "DejaVu Sans Condensed", "DejaVu Sans", sans-serif; }
.tab { box-sizing: border-box; border: 1px solid #b2b4b6; border-bottom: 0; border-radius: 4px 4px 0 0; display: flex; align-items: center; height: 34px; padding-bottom: 1px; }
.tab span { padding-top: 2px; }
.home { width: 100px; background: #ecedef; padding-left: 7px; } .home span { margin-left: 6px; width: 33px; } .home .tx { margin-left: 17px; }
.active { width: 166px; height: 35px; margin-left: 5px; background: #fff; padding-left: 6px; border-left-color: #fff; border-top-color: #fff; font-weight: 700; }
.active span { margin-left: 5px; width: 103px; } .active .tx { margin-left: 12px; }
.gnome { height: 28px; box-sizing: border-box; border-bottom: 1px solid #6c6e70; background: linear-gradient(#ececec, #dfdfdf); display: flex; align-items: center; padding: 0 0 1px 9px; font: 14px/20px "Noto Sans", sans-serif; color: #33393b; }
.applications { margin-left: 8px; width: 77px; } .places { margin-left: 21px; } .clock { margin-left: auto; width: 68px; }
.g1 { margin-left: 21px; } .g2 { margin-left: 12px; } .g3 { margin: 0 15px 0 13px; }
.desktop { position: relative; height: 826px; overflow: hidden; border-bottom: 1px solid #5f6468; }
.band { position: absolute; inset: 0; }
.haze { position: absolute; inset: 0; backdrop-filter: blur(18px); }
.rays { position: absolute; left: 1399px; top: 636px; }
.soft { filter: blur(2px); }
.seven { position: absolute; left: 1452px; top: 618px; font: 300 112px/150px "Lato", sans-serif; color: rgba(205, 219, 236, .72); }
.brand { position: absolute; left: 1420px; top: 761px; font: 13px/14px "Lato", sans-serif; letter-spacing: 14px; color: #d6e4f2; }
.icons { position: relative; display: flex; padding: 36px 0 0 15px; }
.col { width: 234px; display: flex; flex-direction: column; }
.item { height: 150px; display: flex; flex-direction: column; align-items: center; }
.pic { height: 100px; display: flex; justify-content: center; }
.doc { margin-top: 8px; } .folder { margin-top: 11px; } .trash { margin-top: 14px; margin-left: 1px; }
.label { margin-left: 1px; font: 14px/20px "Noto Sans", sans-serif; color: #fff; text-shadow: 1px 1px 0 #000, 1px 1px 1px rgba(0, 0, 0, .7); }
.share { position: absolute; left: 1089px; top: 760px; width: 587px; height: 53px; box-sizing: border-box; background: rgba(255, 255, 255, .97); box-shadow: 0 0 1px 1px rgba(70, 110, 130, .4), 0 2px 4px rgba(0, 0, 0, .3); display: flex; align-items: center; padding-left: 12px; color: #202124; font-size: 14px; }
.grip { width: 8px; height: 14px; box-sizing: border-box; border: solid #d0d2d3; border-width: 0 3px; }
.msg { margin-left: 13px; width: 359px; }
.stop { margin-left: 12px; width: 127px; height: 40px; border-radius: 4px; background: #1a73e8; color: #fff; font-weight: 700; line-height: 39px; text-align: center; }
.hide { margin-left: 11px; color: #1a73e8; text-decoration: underline; }
.panel { flex: 1; display: flex; justify-content: flex-end; align-items: center; background: linear-gradient(#ededed, #dfdfdf); padding-right: 3px; color: #33393b; font: 14.5px/20px "Noto Sans", sans-serif; }
.pager { box-sizing: border-box; width: 47px; height: 27px; border: 1px solid #c9c9c9; background: #dadada; line-height: 23px; text-align: center; }
.status { height: 24px; flex: none; background: #f0f0f0; display: flex; align-items: center; font-size: 14px; }
.hint { margin-left: 1px; margin-top: 1px; } .devices { margin-left: auto; margin-right: 26px; }
.taskbar { height: 50px; flex: none; background: linear-gradient(90deg, #182a29 0, #1c2f33 25%, #203231 37%, #1b2b2c 60%, #182826 70%, #2b393d 87%, #172827 100%); display: flex; color: #fff; }
.start { width: 60px; display: flex; align-items: center; justify-content: center; }
.search { width: 430px; box-sizing: border-box; border: 1px solid #bcbcbc; background: #f2f2f2; display: flex; align-items: center; padding-left: 14px; color: #333; font-size: 17.5px; }
.search span { margin-left: 14px; margin-top: -1px; }
.cortana { width: 63px; box-sizing: border-box; padding-right: 3px; display: flex; align-items: center; justify-content: center; }
.app { width: 62px; height: 50px; display: flex; align-items: center; justify-content: center; position: relative; }
.tg { margin-right: 1px; }
.app.one::after, .app.multi::after { content: ""; position: absolute; left: 6px; bottom: 0; width: 51px; height: 3px; background: #76b9ed; }
.app.multi::after { background: linear-gradient(90deg, #76b9ed 40px, #5b8fbf 40px); }
.app.active { height: 50px; width: 62px; margin: 0; border: 0; padding: 0; background: linear-gradient(90deg, #4a5758 57px, #2d3c3d 57px, #2d3c3d 58px, #3e4c4d 58px); border-radius: 0; }
.app.active::after { content: ""; position: absolute; left: 0; bottom: 0; width: 61px; height: 3px; background: #76b9ed; }
.tray { margin-left: auto; display: flex; align-items: center; width: 559px; }
.temp { margin-left: 13px; width: 38px; font-size: 16.5px; padding-top: 1px; } .sky { margin-left: 11px; width: 88px; font: 17.8px/20px "DejaVu Sans", sans-serif; }
.y1 { margin-left: 21px; } .lang { margin-left: 13px; width: 30px; font-size: 14.5px; }
.when { margin-left: 12px; width: 70px; display: flex; flex-direction: column; align-items: center; font: 13.5px/22px "Open Sans", "DejaVu Sans", sans-serif; letter-spacing: -.4px; }
.bell { margin-left: 19px; } .peek { margin-left: 24px; width: 1px; height: 50px; background: #6c7a7c; }
</style>
